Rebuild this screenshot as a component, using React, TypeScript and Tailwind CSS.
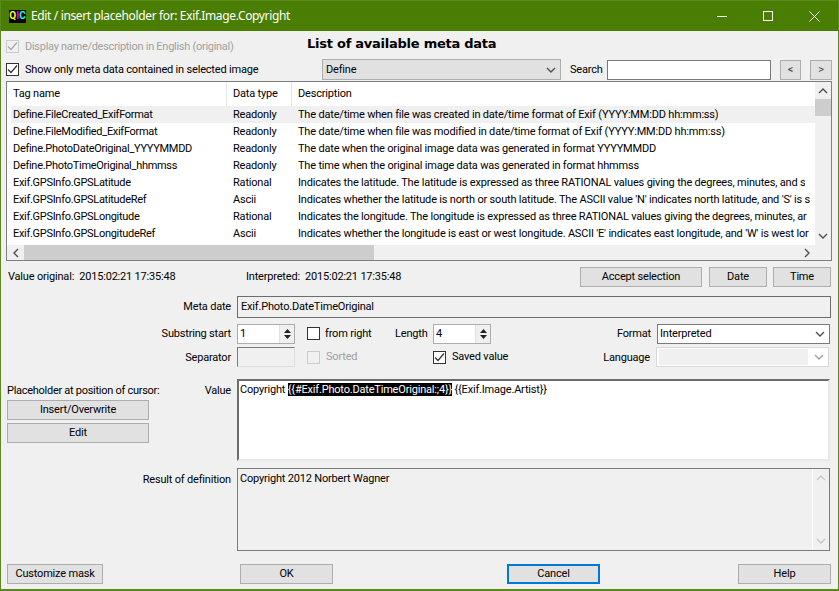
import React from "react";

const rows = [
  ["Define.FileCreated_ExifFormat", "Readonly", "The date/time when file was created in date/time format of Exif (YYYY:MM:DD hh:mm:ss)"],
  ["Define.FileModified_ExifFormat", "Readonly", "The date/time when file was modified in date/time format of Exif (YYYY:MM:DD hh:mm:ss)"],
  ["Define.PhotoDateOriginal_YYYYMMDD", "Readonly", "The date when the original image data was generated in format YYYYMMDD"],
  ["Define.PhotoTimeOriginal_hhmmss", "Readonly", "The time when the original image data was generated in format hhmmss"],
  ["Exif.GPSInfo.GPSLatitude", "Rational", "Indicates the latitude. The latitude is expressed as three RATIONAL values giving the degrees, minutes, and s"],
  ["Exif.GPSInfo.GPSLatitudeRef", "Ascii", "Indicates whether the latitude is north or south latitude. The ASCII value 'N' indicates north latitude, and 'S' is s"],
  ["Exif.GPSInfo.GPSLongitude", "Rational", "Indicates the longitude. The longitude is expressed as three RATIONAL values giving the degrees, minutes, ar"],
  ["Exif.GPSInfo.GPSLongitudeRef", "Ascii", "Indicates whether the longitude is east or west longitude. ASCII 'E' indicates east longitude, and 'W' is west lor"],
];

const Chevron = ({ dir = "down", color = "#505050" }: { dir?: "up" | "down" | "left" | "right"; color?: string }) => {
  const d = {
    down: "M1 3 L5 7 L9 3",
    up: "M1 7 L5 3 L9 7",
    left: "M7 1 L3 5 L7 9",
    right: "M3 1 L7 5 L3 9",
  }[dir];
  return (
    <svg width="10" height="10" viewBox="0 0 10 10" fill="none" stroke={color} strokeWidth="1.4">
      <path d={d} />
    </svg>
  );
};

const Check = ({ checked, disabled }: { checked?: boolean; disabled?: boolean }) => (
  <span
    className={`flex h-[13px] w-[13px] shrink-0 items-center justify-center border ${
      disabled ? "border-[#cccccc] bg-[#f0f0f0]" : "border-[#333333] bg-white"
    }`}
  >
    {checked && (
      <svg width="11" height="11" viewBox="0 0 11 11" fill="none" stroke={disabled ? "#a8a8a8" : "#333333"} strokeWidth="1.2">
        <path d="M1 5.5 L4 8.5 L10 1.5" />
      </svg>
    )}
  </span>
);

const Btn = ({ label, className = "", focused }: { label: string; className?: string; focused?: boolean }) => (
  <button
    className={`flex h-[20px] items-center justify-center bg-[#e1e1e1] ${
      focused ? "border-2 border-[#0078d7]" : "border border-[#adadad]"
    } ${className}`}
  >
    {label}
  </button>
);

const Spin = ({ value }: { value: string }) => (
  <div className="flex h-[20px] w-[58px] items-center border border-[#adadad] bg-white pl-[2px]">
    <span className="flex-1">{value}</span>
    <div className="flex h-[18px] w-[15px] flex-col items-center justify-center gap-[2px] border-l border-[#e0e0e0] bg-[#f0f0f0]">
      <svg width="7" height="4" viewBox="0 0 7 4" fill="#222222"><path d="M3.5 0 L7 4 L0 4 Z" /></svg>
      <svg width="7" height="4" viewBox="0 0 7 4" fill="#222222"><path d="M0 0 L7 0 L3.5 4 Z" /></svg>
    </div>
  </div>
);

export default function App() {
  return (
    <div
      className="flex h-[591px] w-[839px] flex-col overflow-hidden border-x border-b-2 border-[#5a8a1e] bg-[#f0f0f0] text-[11px] leading-[14px] tracking-[-0.19px] text-black"
      style={{ fontFamily: 'Roboto, "Liberation Sans", sans-serif' }}
    >
      {/* Title bar */}
      <div className="flex h-[31px] shrink-0 items-center border-t border-[#5a8a1e] bg-[#4a7e03] pl-[8px] text-white">
        <span className="flex h-[13px] w-[17px] items-center justify-center bg-black text-[10px] font-bold leading-none tracking-normal">
          <span className="text-[#ffff00]">Q</span>
          <span className="text-[#ff00ff]">I</span>
          <span className="text-[#00ffff]">C</span>
        </span>
        <span className="ml-[5px] text-[12px] tracking-[-0.36px]" style={{ fontFamily: '"Noto Sans", sans-serif' }}>
          Edit / insert placeholder for: Exif.Image.Copyright
        </span>
        <div className="ml-auto flex items-center gap-[35px] pr-[18px]">
          <svg width="11" height="11" viewBox="0 0 11 11" stroke="white" fill="none"><path d="M0 5.5 H10" /></svg>
          <svg width="11" height="11" viewBox="0 0 11 11" stroke="white" fill="none"><rect x="0.5" y="0.5" width="9" height="9" /></svg>
          <svg width="11" height="11" viewBox="0 0 11 11" stroke="white" fill="none"><path d="M0.5 0.5 L10.5 10.5 M10.5 0.5 L0.5 10.5" /></svg>
        </div>
      </div>

      <div className="flex flex-1 flex-col pl-[5px] pr-[6px]">
        {/* Top options */}
        <div className="mt-[9px] flex h-[13px] items-center">
          <Check checked disabled />
          <span className="ml-[6px] w-[282px] tracking-[-0.28px] text-[#a0a0a0]">Display name/description in English (original)</span>
          <span className="-mt-[6px] whitespace-nowrap text-[13px] font-bold tracking-[-0.25px]" style={{ fontFamily: '"DejaVu Sans", sans-serif' }}>
            List of available meta data
          </span>
        </div>
        <div className="mt-[6px] flex h-[21px] items-center">
          <Check checked />
          <span className="ml-[6px] w-[297px]">Show only meta data contained in selected image</span>
          <div className="flex h-[21px] w-[239px] items-center justify-between border border-[#adadad] bg-[#e1e1e1] pl-[3px] pr-[4px]">
            <span>Define</span>
            <Chevron />
          </div>
          <span className="ml-[9px] w-[37px]">Search</span>
          <div className="h-[20px] w-[164px] border border-[#7a7a7a] bg-white" />
          <Btn label="<" className="ml-[9px] w-[21px] text-[#444444]" />
          <Btn label=">" className="ml-[9px] w-[22px] text-[#444444]" />
        </div>

        {/* Tag list */}
        <div className="mt-[1px] flex h-[180px] w-[826px] border border-[#7f7f7f] bg-[#f0f0f0]">
          <div className="flex w-[808px] flex-col">
            <div className="flex h-[24px] shrink-0 items-center bg-white">
              <span className="flex h-full w-[220px] items-center border-r border-[#e5e5e5] pl-[6px]">Tag name</span>
              <span className="flex h-full w-[65px] items-center border-r border-[#e5e5e5] pl-[6px]">Data type</span>
              <span className="pl-[6px]">Description</span>
            </div>
            <div className="flex-1 overflow-hidden bg-white">
              {rows.map((r, i) => (
                <div
                  key={r[0]}
                  className={`ml-[4px] flex h-[17px] items-center whitespace-nowrap ${i === 0 ? "bg-[#f0f0f0]" : ""}`}
                >
                  <span className="w-[222px] shrink-0 pl-[2px] tracking-[-0.3px]">{r[0]}</span>
                  <span className="w-[65px] shrink-0">{r[1]}</span>
                  <span className="overflow-hidden">{r[2]}</span>
                </div>
              ))}
            </div>
            <div className="flex h-[15px] shrink-0 items-center">
              <span className="flex w-[17px] justify-center"><Chevron dir="left" /></span>
              <div className="h-full w-[350px] bg-[#cdcdcd]" />
              <span className="ml-auto flex w-[17px] justify-center"><Chevron dir="right" /></span>
            </div>
          </div>
          <div className="flex w-[16px] flex-col items-center">
            <span className="flex h-[17px] items-center"><Chevron dir="up" /></span>
            <div className="h-[17px] w-full bg-[#cdcdcd]" />
            <span className="mt-[111px] flex h-[17px] items-center"><Chevron dir="down" /></span>
          </div>
        </div>

        {/* Values and accept buttons */}
        <div className="mt-[6px] flex h-[20px] items-center">
          <span className="ml-[2px] w-[238px]">Value original:&nbsp; 2015:02:21 17:35:48</span>
          <span className="w-[334px]">Interpreted:&nbsp; 2015:02:21 17:35:48</span>
          <Btn label="Accept selection" className="w-[122px]" />
          <Btn label="Date" className="ml-[7px] w-[58px]" />
          <Btn label="Time" className="ml-[6px] w-[58px]" />
        </div>

        {/* Meta date */}
        <div className="mt-[9px] flex h-[22px] items-center">
          <span className="w-[225px] text-right">Meta date</span>
          <div className="ml-[6px] flex h-full w-[594px] items-center border border-[#6d6d6d] pl-[3px]">
            Exif.Photo.DateTimeOriginal
          </div>
        </div>

        {/* Substring */}
        <div className="mt-[5px] flex h-[21px] items-center">
          <span className="w-[225px] text-right">Substring start</span>
          <div className="ml-[6px]"><Spin value="1" /></div>
          <span className="ml-[12px]"><Check /></span>
          <span className="ml-[5px] w-[70px]">from right</span>
          <span className="w-[38px]">Length</span>
          <Spin value="4" />
          <span className="w-[160px] text-right">Format</span>
          <div className="ml-[6px] flex h-[20px] w-[173px] items-center justify-between border border-[#7a7a7a] bg-white pl-[2px] pr-[4px]">
            <span>Interpreted</span>
            <Chevron />
          </div>
        </div>

        {/* Separator */}
        <div className="mt-[3px] flex h-[20px] items-center">
          <span className="w-[225px] pt-[1px] text-right">Separator</span>
          <div className="ml-[6px] h-full w-[58px] border border-[#7a7a7a] border-r-[#dddddd] border-b-[#dddddd]" />
          <span className="ml-[12px]"><Check disabled /></span>
          <span className="ml-[6px] w-[107px] text-[#a0a0a0]">Sorted</span>
          <Check checked />
          <span className="ml-[6px] w-[145px]">Saved value</span>
          <span className="w-[53px] pt-[1px] text-right">Language</span>
          <div className="ml-[6px] flex h-full w-[173px] items-center justify-between border border-[#d9d9d9] bg-white pl-[2px] pr-[4px]">
            <span className="h-[16px] w-[149px] bg-[#f0f0f0]" />
            <Chevron color="#a0a0a0" />
          </div>
        </div>

        {/* Value */}
        <div className="mt-[12px] flex h-[82px]">
          <div className="flex w-[225px] flex-col">
            <div className="flex h-[20px] justify-between pl-[1px] pt-[4px]">
              <span className="mt-[1px] tracking-[-0.28px]">Placeholder at position of cursor:</span>
              <span className="mt-[1px]">Value</span>
            </div>
            <Btn label="Insert/Overwrite" className="ml-[1px] mt-[1px] w-[142px]" />
            <Btn label="Edit" className="ml-[1px] mt-[3px] w-[142px]" />
          </div>
          <div className="ml-[6px] h-full w-[593px] border-2 border-[#6d6d6d] border-r-[#e8e8e8] border-b-[#e8e8e8] bg-white pl-[1px] pt-[2px]">
            Copyright <span className="bg-black text-white">{"{{#Exif.Photo.DateTimeOriginal:;4}}"}</span> {"{{Exif.Image.Artist}}"}
          </div>
        </div>

        {/* Result */}
        <div className="mt-[7px] flex h-[83px]">
          <span className="w-[225px] pt-[5px] text-right">Result of definition</span>
          <div className="ml-[6px] flex h-full w-[593px] border border-[#7a7a7a]">
            <div className="flex-1 border-r border-white pl-[2px] pt-[3px]">Copyright 2012 Norbert Wagner</div>
            <div className="flex w-[16px] flex-col items-center justify-between py-[4px]">
              <Chevron dir="up" color="#c8c8c8" />
              <Chevron dir="down" color="#c8c8c8" />
            </div>
          </div>
        </div>

        {/* Footer */}
        <div className="mt-[13px] flex h-[20px] items-center">
          <Btn label="Customize mask" className="ml-[1px] w-[96px]" />
          <Btn label="OK" className="ml-[137px] w-[93px]" />
          <Btn label="Cancel" focused className="ml-[174px] w-[93px]" />
          <Btn label="Help" className="ml-[138px] w-[93px]" />
        </div>
      </div>
    </div>
  );
}
